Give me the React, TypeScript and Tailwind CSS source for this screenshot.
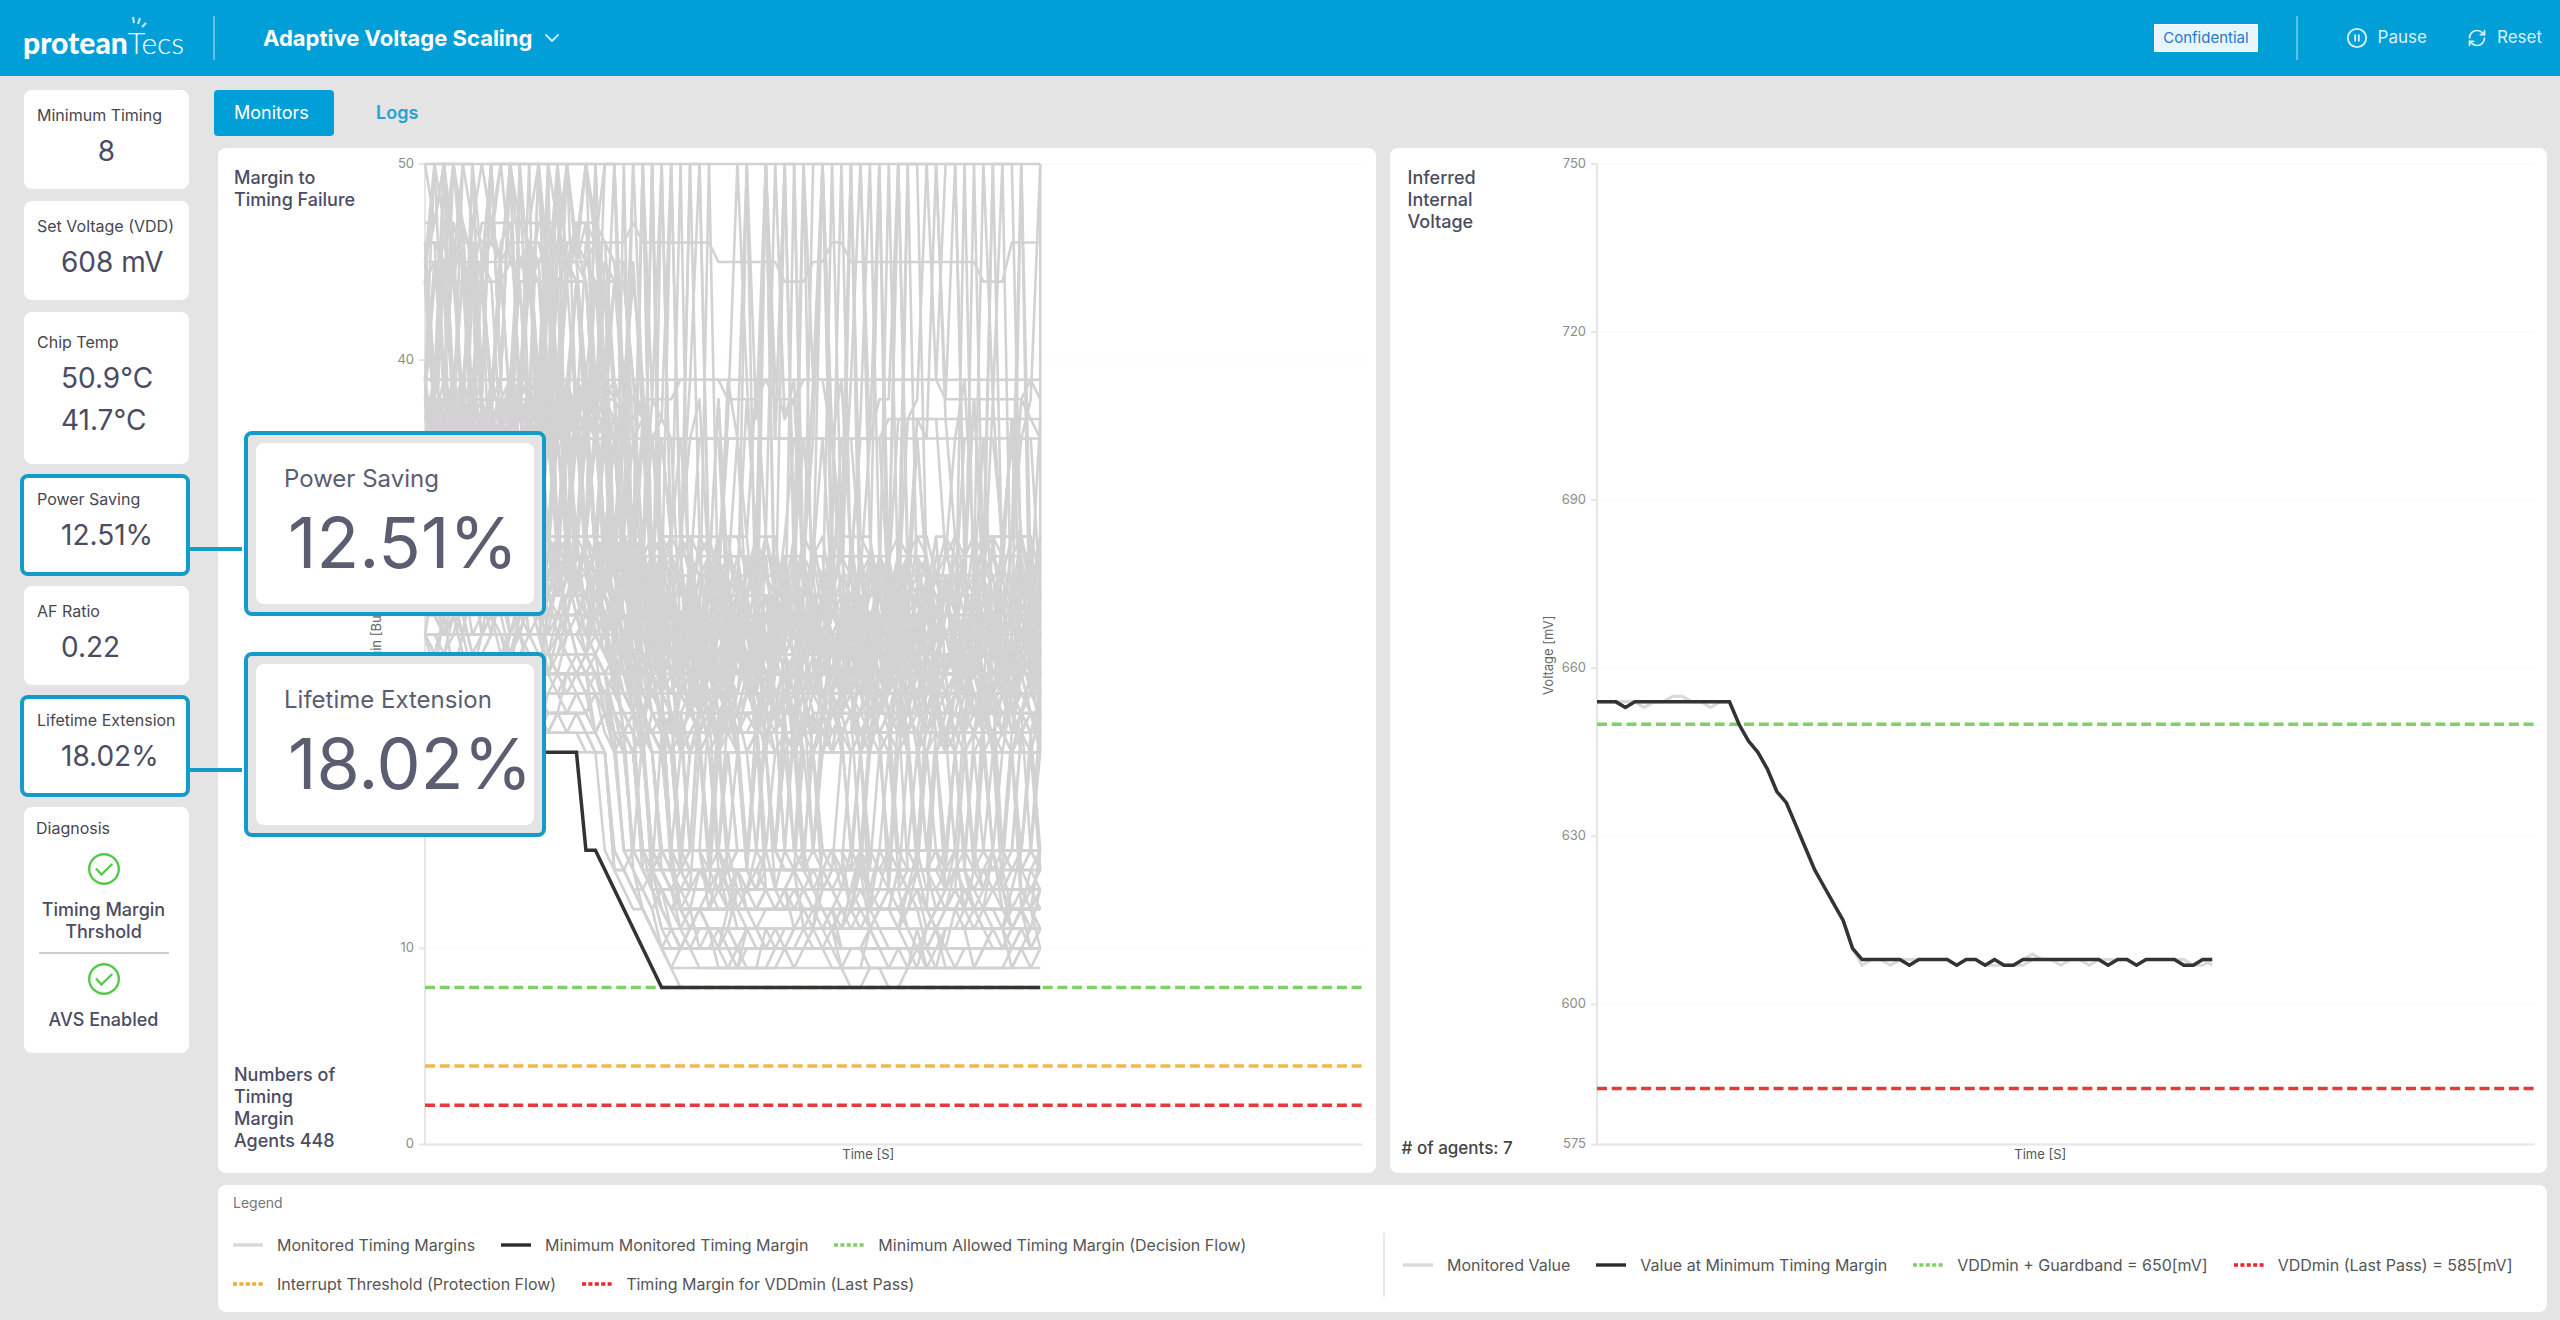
import React from 'react';
import { RefreshCw, CirclePause, ChevronDown } from 'lucide-react';

const STEP = 9.46;
const AXIS_X = 57;
const RIGHT_X = 994;
const TOP_Y = 16;
const BOTTOM_Y = 996;
const SAMPLES = 66;

const LEVELS = [
  8, 9, 10, 11, 12, 13, 14, 15, 20, 21, 22, 23, 24, 25, 26, 27, 28, 29, 30, 31,
  36, 37, 38, 39, 44, 45, 46, 47, 50,
];

const createRandom = (seed) => {
  let state = seed;
  return () => {
    state = (state * 1664525 + 1013904223) % 4294967296;
    return state / 4294967296;
  };
};

const toX = (step) => AXIS_X + step * STEP;

const toPoints = (values, toY) =>
  values.map((value, i) => `${toX(i).toFixed(1)},${toY(value).toFixed(1)}`).join(' ');

const marginY = (value) => BOTTOM_Y - value * 19.6;
const voltageY = (value) => BOTTOM_Y - (value - 575) * 5.6;

// Timing margins of the agents before, during and after the voltage drop
const buildMargins = () => {
  const random = createRandom(448);
  const lines = [];
  const addAgent = (start, drop, noise, calm) => {
    const delay = random() * 3;
    const values = [];
    let offset = 0;
    for (let t = 0; t < SAMPLES; t++) {
      const progress = Math.min(1, Math.max(0, (t - 16 - delay) / 9));
      if (random() > calm) {
        offset = Math.round((random() - 0.5) * 2 * noise);
      }
      const floor = t < 18 + delay ? 8 : Math.max(0, Math.ceil(8 - progress * 8));
      const index = Math.round(start - drop * progress) + offset;
      values.push(LEVELS[Math.min(LEVELS.length - 1, Math.max(floor, index))]);
    }
    lines.push(values);
  };

  // Agents that hit the 50 ceiling now and then and fall back at once
  const addSpikes = (low, range, rate) => {
    const values = [];
    for (let t = 0; t < SAMPLES; t++) {
      const base = t < 20 ? low + 5 : low;
      values.push(random() < rate ? 50 : LEVELS[base + Math.floor(random() * range)]);
    }
    lines.push(values);
  };

  for (let i = 0; i < 30; i++) addAgent(9 + random() * 7, 8, 1, 0.45);
  for (let i = 0; i < 14; i++) addAgent(13 + random() * 4, 8, 2, 0.4);
  for (let i = 0; i < 68; i++) addAgent(16 + random() * 6, 7, 2, 0.35);
  for (let i = 0; i < 14; i++) addAgent(21 + random() * 2, 7, 3, 0.3);
  for (let i = 0; i < 9; i++) addAgent(25 + random(), 9, 3, 0.3);
  for (let i = 0; i < 4; i++) addSpikes(11, 9, 0.2);
  for (let i = 0; i < 4; i++) addSpikes(16, 8, 0.25);
  [8, 9, 10, 11, 12, 13, 14, 15, 16].forEach((level) => addAgent(level, 8, 0, 0));
  addAgent(20, 0, 1, 0.93);
  addAgent(22, 0, 1, 0.7);
  addAgent(26, 1, 1, 0.8);
  addAgent(23, 0, 0, 0);
  addAgent(20, 0, 0, 0);
  addAgent(28, 0, 0, 0);
  return lines;
};

const MARGINS = buildMargins();

const MIN_MARGIN = [
  [0, 20], [16, 20], [17, 15], [18, 15], [25, 8], [65, 8],
];

const MIN_VOLTAGE = [
  654, 654, 654, 653, 654, 654, 654, 654, 654, 654, 654, 654, 654, 654, 654, 650,
  647, 645, 642, 638, 636, 632, 628, 624, 621, 618, 615, 610, 608, 608, 608, 608,
  608, 607, 608, 608, 608, 608, 607, 608, 608, 607, 608, 607, 607, 608, 608, 608,
  608, 608, 608, 608, 608, 608, 607, 608, 608, 607, 608, 608, 608, 608, 607, 607,
  608, 608,
];

const shiftVoltage = (changes) => MIN_VOLTAGE.map((value, i) => value + (changes[i] || 0));

const VOLTAGES = [
  shiftVoltage({ 3: 1, 5: -1, 8: 1, 9: 1, 28: -1, 33: 1, 46: 1, 54: 1, 65: -1 }),
  shiftVoltage({ 3: 1, 12: -1, 31: -1, 42: -1, 45: -1, 49: -1, 52: -1, 62: 1, 64: -1 }),
];

const Logo = () => (
  <div className="relative flex h-11 w-[164px] items-end font-['Lato',sans-serif] text-[30px] leading-9 text-white">
    <span className="font-black">protean</span>
    <span className="font-light">Tecs</span>
    <svg className="absolute top-0 left-[107px] h-4 w-5" viewBox="0 0 20 16" fill="none" stroke="#c8ecf8" strokeWidth="2">
      <path d="M3 1l1 6M10 2L8 8M16 7l-4 4" />
    </svg>
  </div>
);

const Header = () => (
  <header className="flex h-[76px] items-center bg-[#009fd7] pr-[18px] pl-[23px] text-white">
    <Logo />
    <div className="ml-[26px] h-11 w-0.5 bg-[#5cc2e6]" />
    <button className="ml-12 flex items-center gap-2 text-[22px] font-bold">
      Adaptive Voltage Scaling
      <ChevronDown className="size-6 text-[#bfe8f6]" strokeWidth={2} />
    </button>
    <div className="ml-auto border border-white bg-[#e6f6fd] px-2 text-[15px] leading-[26px] text-[#2b77c9]">
      Confidential
    </div>
    <div className="ml-[38px] h-11 w-0.5 bg-[#5cc2e6]" />
    <button className="ml-12 flex items-center gap-2.5 text-[17px] text-[#d9f2fb]">
      <CirclePause className="size-[22px]" strokeWidth={2} />
      Pause
    </button>
    <button className="ml-10 flex items-center gap-2.5 text-[17px] text-[#d9f2fb]">
      <RefreshCw className="size-5" strokeWidth={2} />
      Reset
    </button>
  </header>
);

const Callout = ({ label, value }) => (
  <div className="absolute top-[-47px] left-[220px] z-10 w-[302px] rounded-lg border-4 border-[#149bc9] bg-[#e4e4e4] p-2">
    <div className="flex h-[161px] flex-col rounded-lg bg-white pt-5 pl-7 text-[#5b5d70]">
      <span className="text-2xl leading-8 whitespace-nowrap">{label}</span>
      <span className="pl-1 text-[70px] leading-[96px] whitespace-nowrap">{value}</span>
    </div>
  </div>
);

const StatCard = ({ label, values, centered = false, highlighted = false }) => (
  <section
    className={
      highlighted
        ? 'relative -my-0.5 -mr-px -ml-1 h-[102px] rounded-lg border-4 border-[#149bc9] bg-white pt-2.5'
        : `rounded-lg bg-white ${values.length > 1 ? 'h-[152px] pt-[19px]' : 'h-[99px] pt-3.5'}`
    }
  >
    <h2 className="pl-[13px] text-base leading-[22px] whitespace-nowrap text-[#47474f]">{label}</h2>
    <div className={`mt-1 text-[28px] leading-[42px] text-[#4b4c63] ${centered ? 'text-center' : 'pl-[37px]'}`}>
      {values.map((value) => (
        <p key={value}>{value}</p>
      ))}
    </div>
    {highlighted && (
      <>
        <div className="absolute top-[69px] left-full z-10 h-1 w-[56px] bg-[#149bc9]" />
        <Callout label={label} value={values[0]} />
      </>
    )}
  </section>
);

const CheckIcon = () => (
  <svg className="size-8" viewBox="0 0 32 32" fill="none" stroke="#54c94b" strokeWidth="2.4">
    <circle cx="16" cy="16" r="14.8" />
    <path d="M8 15.5l5.4 6L24.3 11" />
  </svg>
);

const Diagnosis = () => (
  <section className="h-[246px] rounded-lg bg-white pt-2.5 text-[#4b4c63]">
    <h2 className="pl-3 text-base leading-[22px] text-[#47474f]">Diagnosis</h2>
    <div className="flex flex-col items-center pt-3.5 pr-1.5 text-center text-lg leading-[22px] font-medium">
      <CheckIcon />
      <p className="mt-3.5 px-2">Timing Margin Thrshold</p>
      <hr className="my-[9px] w-[130px] border-t-2 border-[#cfcfcf]" />
      <CheckIcon />
      <p className="mt-3.5">AVS Enabled</p>
    </div>
  </section>
);

const Sidebar = () => (
  <aside className="flex w-[165px] shrink-0 flex-col gap-3">
    <StatCard label="Minimum Timing" values={['8']} centered />
    <StatCard label="Set Voltage (VDD)" values={['608 mV']} />
    <StatCard label="Chip Temp" values={['50.9°C', '41.7°C']} />
    <StatCard label="Power Saving" values={['12.51%']} highlighted />
    <StatCard label="AF Ratio" values={['0.22']} />
    <StatCard label="Lifetime Extension" values={['18.02%']} highlighted />
    <Diagnosis />
  </aside>
);

const Axes = ({ ticks, toY, label }) => (
  <>
    {ticks.map((tick) => (
      <g key={tick}>
        <line x1={AXIS_X} x2={RIGHT_X} y1={toY(tick)} y2={toY(tick)} stroke="#fbfbfb" strokeWidth="2" />
        <line x1={AXIS_X - 6} x2={AXIS_X} y1={toY(tick)} y2={toY(tick)} stroke="#e6e6e6" strokeWidth="2" />
        <text x={AXIS_X - 11} y={toY(tick) + 4} textAnchor="end" fontSize="13" fill="#8c8c8c">
          {tick}
        </text>
      </g>
    ))}
    <path d={`M${AXIS_X} ${TOP_Y}V${BOTTOM_Y}H${RIGHT_X}`} fill="none" stroke="#e6e6e6" strokeWidth="2" />
    <text x="500" y="1011" textAnchor="middle" fontSize="13" fill="#555">
      Time [S]
    </text>
    <text transform="translate(13 507) rotate(-90)" textAnchor="middle" fontSize="13" fill="#666">
      {label}
    </text>
  </>
);

const Threshold = ({ y, color }) => (
  <line x1={AXIS_X} x2={RIGHT_X} y1={y} y2={y} stroke={color} strokeWidth="3.5" strokeDasharray="10 4.7" />
);

const MarginChart = () => (
  <svg className="min-w-0 flex-1" viewBox="0 0 1007 1024">
    <Axes ticks={[50, 40, 10, 0]} toY={marginY} label="Timing Margin [Buffers]" />
    <g fill="none" stroke="#d2d2d2" strokeWidth="2.6" strokeLinejoin="round">
      {MARGINS.map((values, i) => (
        <polyline key={i} points={toPoints(values, marginY)} />
      ))}
      <path d={`M${toX(65)} ${TOP_Y}V${marginY(20)}`} />
    </g>
    <Threshold y={marginY(8)} color="#7ed067" />
    <Threshold y={marginY(4)} color="#f2b84b" />
    <Threshold y={marginY(2)} color="#e33a3e" />
    <polyline
      points={MIN_MARGIN.map(([step, value]) => `${toX(step)},${marginY(value)}`).join(' ')}
      fill="none"
      stroke="#333"
      strokeWidth="3.5"
    />
  </svg>
);

const VoltageChart = () => (
  <svg className="min-w-0 flex-1" viewBox="0 0 1007 1024">
    <Axes ticks={[750, 720, 690, 660, 630, 600, 575]} toY={voltageY} label="Voltage [mV]" />
    <Threshold y={voltageY(650)} color="#7ed067" />
    <Threshold y={voltageY(585)} color="#e33a3e" />
    <g fill="none" stroke="#d9d9d9" strokeWidth="3">
      {VOLTAGES.map((values, i) => (
        <polyline key={i} points={toPoints(values, voltageY)} />
      ))}
    </g>
    <polyline points={toPoints(MIN_VOLTAGE, voltageY)} fill="none" stroke="#333" strokeWidth="3.5" />
  </svg>
);

const LINE_STYLES = {
  gray: { color: '#d9d9d9', dashes: undefined },
  black: { color: '#2b2b2b', dashes: undefined },
  green: { color: '#7ed067', dashes: '4 2.4' },
  orange: { color: '#f0ab2e', dashes: '4 2.4' },
  red: { color: '#e8262b', dashes: '4 2.4' },
};

const LegendItem = ({ line, children }) => (
  <li className="flex items-center gap-3.5 whitespace-nowrap">
    <svg className="h-1 w-[30px]" viewBox="0 0 30 4">
      <line
        x2="30"
        y1="2"
        y2="2"
        stroke={LINE_STYLES[line].color}
        strokeWidth="3.4"
        strokeDasharray={LINE_STYLES[line].dashes}
      />
    </svg>
    {children}
  </li>
);

const Legend = () => (
  <section className="flex h-[127px] rounded-lg bg-white pl-[15px] text-base leading-[22px] text-[#555]">
    <div className="min-w-0 flex-1 pt-[7px]">
      <h2 className="text-sm leading-[22px] text-[#777]">Legend</h2>
      <ul className="mt-5 flex flex-wrap gap-x-[26px] gap-y-[17px]">
        <LegendItem line="gray">Monitored Timing Margins</LegendItem>
        <LegendItem line="black">Minimum Monitored Timing Margin</LegendItem>
        <LegendItem line="green">Minimum Allowed Timing Margin (Decision Flow)</LegendItem>
        <LegendItem line="orange">Interrupt Threshold (Protection Flow)</LegendItem>
        <LegendItem line="red">Timing Margin for VDDmin (Last Pass)</LegendItem>
      </ul>
    </div>
    <ul className="mt-12 flex h-16 w-[1164px] items-center gap-x-[26px] border-l-2 border-[#e8e8e8] pl-[18px]">
      <LegendItem line="gray">Monitored Value</LegendItem>
      <LegendItem line="black">Value at Minimum Timing Margin</LegendItem>
      <LegendItem line="green">VDDmin + Guardband = 650[mV]</LegendItem>
      <LegendItem line="red">VDDmin (Last Pass) = 585[mV]</LegendItem>
    </ul>
  </section>
);

const App = () => {
  return (
    <div className="min-h-screen bg-[#e4e4e4] font-['Inter',sans-serif]">
      <Header />
      <div className="flex gap-[29px] pt-3.5 pr-[13px] pb-[7px] pl-6">
        <Sidebar />
        <main className="min-w-0 flex-1">
          {/* Tabs */}
          <nav className="-ml-1 flex h-[46px] gap-[22px] text-lg">
            <button className="w-[120px] rounded-sm bg-[#009fd7] pl-5 text-left text-white">Monitors</button>
            <button className="px-5 font-semibold text-[#2b9fce]">Logs</button>
          </nav>

          {/* Charts */}
          <div className="my-3 grid grid-cols-2 gap-3.5">
            <section className="flex rounded-lg bg-white">
              <div className="flex w-[150px] shrink-0 flex-col justify-between pt-[19px] pb-[21px] pl-4 text-lg leading-[22px] font-medium text-[#4b4c63]">
                <h2>Margin to Timing Failure</h2>
                <p className="w-[110px]">Numbers of Timing Margin Agents 448</p>
              </div>
              <MarginChart />
            </section>
            <section className="flex rounded-lg bg-white">
              <div className="flex w-[150px] shrink-0 flex-col justify-between pt-[19px] pb-3.5 pl-3 text-lg leading-[22px] font-medium text-[#4b4c63]">
                <h2 className="w-[90px] pl-1.5">Inferred Internal Voltage</h2>
                <p className="text-[17px] whitespace-nowrap text-[#444]"># of agents: 7</p>
              </div>
              <VoltageChart />
            </section>
          </div>

          <Legend />
        </main>
      </div>
    </div>
  );
};

export default App;
